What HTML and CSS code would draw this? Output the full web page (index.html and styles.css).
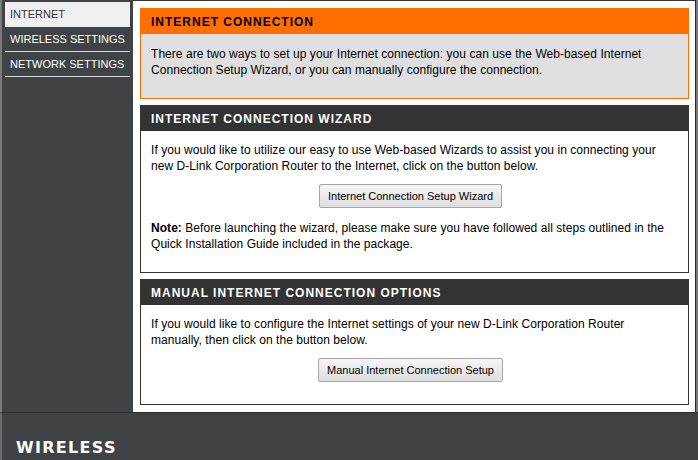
FILE: index.html
```html
<!DOCTYPE html>
<html>
<head>
<meta charset="utf-8">
<title>Internet</title>
<link rel="stylesheet" href="styles.css">
</head>
<body>
<div class="page">
  <nav class="sidebar">
    <div class="nav-item active">INTERNET</div>
    <div class="nav-item">WIRELESS SETTINGS</div>
    <div class="nav-item">NETWORK SETTINGS</div>
  </nav>
  <main class="main">
    <section class="box box-orange">
      <div class="box-head">INTERNET CONNECTION</div>
      <div class="box-body">
        <p class="txt">There are two ways to set up your Internet connection: you can use the Web-based Internet Connection Setup Wizard, or you can manually configure the connection.</p>
      </div>
    </section>
    <section class="box">
      <div class="box-head">INTERNET CONNECTION WIZARD</div>
      <div class="box-body">
        <p class="txt">If you would like to utilize our easy to use Web-based Wizards to assist you in connecting your new D-Link Corporation Router to the Internet, click on the button below.</p>
        <div class="btn-row"><button class="btn">Internet Connection Setup Wizard</button></div>
        <p class="txt"><b class="note">Note:</b> Before launching the wizard, please make sure you have followed all steps outlined in the Quick Installation Guide included in the package.</p>
      </div>
    </section>
    <section class="box box-last">
      <div class="box-head">MANUAL INTERNET CONNECTION OPTIONS</div>
      <div class="box-body">
        <p class="txt">If you would like to configure the Internet settings of your new D-Link Corporation Router manually, then click on the button below.</p>
        <div class="btn-row"><button class="btn">Manual Internet Connection Setup</button></div>
      </div>
    </section>
  </main>
</div>
<footer class="footer">
  <span class="brand">WIRELESS</span>
</footer>
</body>
</html>
```
FILE: styles.css
```css
html, body {
  margin: 0;
  padding: 0;
}
body {
  width: 698px;
  height: 460px;
  overflow: hidden;
  background: #404345;
  font-family: "Liberation Sans", Arial, sans-serif;
  font-size: 11px;
  color: #000;
}
.page {
  display: flex;
  height: 412px;
  border-left: 2px solid #7a7a7a;
  border-right: 2px solid #7a7a7a;
  box-sizing: border-box;
}
.sidebar {
  width: 131px;
  padding: 2px 3px 0 3px;
  box-sizing: border-box;
  background: #404345;
}
.nav-item {
  height: 24px;
  line-height: 24px;
  padding-left: 5px;
  color: #fff;
  font-size: 11px;
  border-bottom: 1px solid #d8d8d8;
}
.nav-item.active {
  background: #f0f0f0;
  color: #333;
  border-bottom-color: #f0f0f0;
}
.main {
  flex: 1;
  background: #fff;
  border-top: 1px solid #333;
  border-right: 1px solid #2b2b2b;
  padding: 7px 6px 0 7px;
}
.box {
  border: 1px solid #333;
  margin-bottom: 6px;
}
.box-head {
  height: 25px;
  line-height: 26px;
  background: #333;
  color: #fff;
  font-weight: bold;
  font-size: 12px;
  letter-spacing: 1px;
  padding-left: 10px;
}
.box-body {
  padding: 11px 18px 20px 10px;
}
.box-orange {
  border-color: #ff6f00;
}
.box-orange .box-head {
  background: #ff6f00;
  color: #000;
}
.box-orange .box-body {
  background: #dfdfdf;
  padding-top: 12px;
  padding-bottom: 20px;
}
.box-last .box-body {
  padding-bottom: 22px;
}
.txt {
  margin: 0;
  line-height: 16px;
  font-size: 12px;
  letter-spacing: 0.05px;
  color: #000;
}
.note {
  font-weight: bold;
}
.btn-row {
  display: flex;
  justify-content: center;
  margin: 10px 0 12px 0;
}
.box-last .btn-row {
  margin-bottom: 0;
}
.btn {
  height: 24px;
  padding: 0 8px;
  font-family: "Liberation Sans", Arial, sans-serif;
  font-size: 11px;
  color: #000;
  background: linear-gradient(#f6f6f6, #dedede);
  border: 1px solid #a6a6a6;
  border-radius: 2px;
}
.footer {
  height: 48px;
  box-sizing: border-box;
  border-top: 1px solid #2b2b2b;
  border-left: 2px solid #6a6a6a;
  padding: 27px 0 0 14px;
}
.brand {
  display: block;
  font-family: "DejaVu Sans", sans-serif;
  font-weight: bold;
  font-size: 16px;
  letter-spacing: 1.3px;
  color: #fff;
  line-height: 16px;
}
```
